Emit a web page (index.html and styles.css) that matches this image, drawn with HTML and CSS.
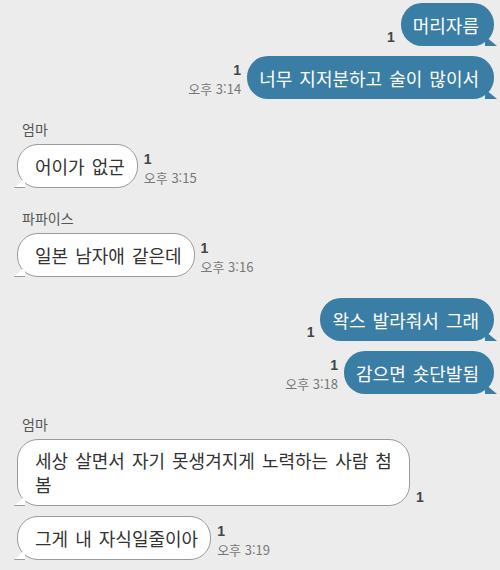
FILE: index.html
```html
<!DOCTYPE html>
<html lang="ko">
<head>
  <meta charset="UTF-8" />
  <title>채팅</title>
  <link rel="stylesheet" href="styles.css">
</head>
<body>
  <div class="chat">
    <div class="row me first">
      <div class="meta"><span class="read">1</span></div>
      <div class="bubble">머리자름</div>
    </div>
    <div class="row me">
      <div class="meta"><span class="read">1</span><span class="time">오후 3:14</span></div>
      <div class="bubble">너무 지저분하고 술이 많이서</div>
    </div>

    <div class="name">엄마</div>
    <div class="row you">
      <div class="bubble">어이가 없군</div>
      <div class="meta"><span class="read">1</span><span class="time">오후 3:15</span></div>
    </div>

    <div class="name">파파이스</div>
    <div class="row you">
      <div class="bubble">일본 남자애 같은데</div>
      <div class="meta"><span class="read">1</span><span class="time">오후 3:16</span></div>
    </div>

    <div class="row me gap-big">
      <div class="meta"><span class="read">1</span></div>
      <div class="bubble">왁스 발라줘서 그래</div>
    </div>
    <div class="row me">
      <div class="meta"><span class="read">1</span><span class="time">오후 3:18</span></div>
      <div class="bubble">감으면 숏단발됨</div>
    </div>

    <div class="name">엄마</div>
    <div class="row you">
      <div class="bubble wide">세상 살면서 자기 못생겨지게 노력하는 사람 첨봄</div>
      <div class="meta"><span class="read">1</span></div>
    </div>
    <div class="row you">
      <div class="bubble">그게 내 자식일줄이아</div>
      <div class="meta"><span class="read">1</span><span class="time">오후 3:19</span></div>
    </div>
  </div>
</body>
</html>
```

FILE: styles.css
```css
body {
  margin: 0;
  background: #ececec;
  font-family: "Noto Sans CJK KR", "Noto Sans", sans-serif;
  color: #333;
}

.chat {
  display: flex;
  flex-direction: column;
  padding: 3px 6px 0 17px;
}

.row {
  display: flex;
  align-items: flex-end;
  gap: 6px;
  margin-top: 10px;
}

.row.first { margin-top: 0; }
.row.gap-big { margin-top: 21px; }
.name + .row { margin-top: 5px; }

.me { justify-content: flex-end; }

.bubble {
  position: relative;
  font-size: 18px;
  word-spacing: 2px;
  line-height: 26px;
  border-radius: 21px;
  box-sizing: border-box;
}

.me .bubble {
  background: #3b7ea5;
  color: #fff;
  padding: 9px 15px 8px 12px;
}

.me .bubble::after {
  content: "";
  position: absolute;
  right: -3px;
  bottom: 0;
  width: 12px;
  height: 10px;
  background: #3b7ea5;
  clip-path: polygon(0 0, 100% 100%, 0 100%);
}

.you .bubble {
  background: #fff;
  border: 1px solid #9a9a9a;
  padding: 8px 12px 8px 17px;
  color: #333;
}

.you .bubble::after {
  content: "";
  position: absolute;
  left: -4px;
  bottom: -1px;
  width: 10px;
  height: 9px;
  background: #fff;
  border-bottom: 1px solid #9a9a9a;
  border-left: 1px solid #9a9a9a;
  clip-path: polygon(0 100%, 100% 0, 100% 100%);
}

.you .bubble.wide {
  width: 393px;
  line-height: 24px;
  padding-bottom: 9px;
}

.meta {
  display: flex;
  flex-direction: column;
  flex-shrink: 0;
}

.me .meta { align-items: flex-end; }
.you .meta { align-items: flex-start; }

.read {
  font-family: "Liberation Sans", sans-serif;
  font-size: 14px;
  font-weight: bold;
  line-height: 18px;
  color: #444;
}

.time {
  font-size: 13px;
  line-height: 20px;
  color: #777;
}

.name {
  font-size: 14px;
  color: #555;
  margin: 20px 0 0 5px;
  line-height: 20px;
}
```
